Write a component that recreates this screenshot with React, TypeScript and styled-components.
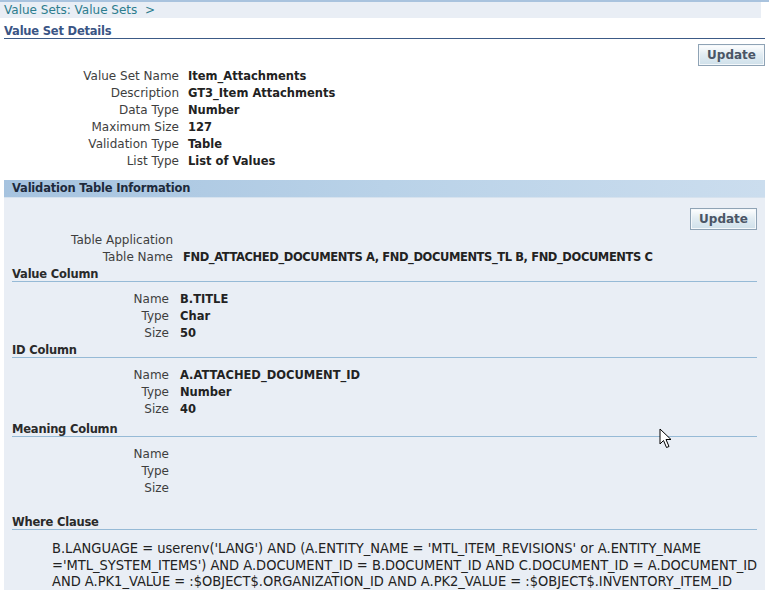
import React from 'react';
import styled, { createGlobalStyle } from 'styled-components';

const GlobalStyle = createGlobalStyle`
  html, body {
    margin: 0;
    padding: 0;
    background: #ffffff;
    font-family: "DejaVu Sans", Verdana, sans-serif;
    font-size: 12px;
    color: #333333;
  }
`;

const Page = styled.div`
  position: relative;
  width: 769px;
  height: 590px;
  overflow: hidden;
  border-top: 2px solid #a9c3de;
  box-sizing: border-box;
`;

const Breadcrumb = styled.div`
  height: 16px;
  line-height: 16px;
  background: #e9eef5;
  padding-left: 4px;
  font-size: 12px;
  color: #2d7d8e;
  margin-right: 8px;
`;

const Body = styled.div`
  padding: 0 4px;
`;

const PageTitle = styled.h1`
  margin: 7px 0 0;
  font-size: 11.5px;
  letter-spacing: -0.2px;
  font-weight: bold;
  color: #3a5585;
  line-height: 13px;
  padding-bottom: 0;
  border-bottom: 1px solid #3c5a86;
`;

const ButtonRow = styled.div<{ $top: number }>`
  display: flex;
  justify-content: flex-end;
  padding-top: ${({ $top }) => `${$top}px`};
`;

const Button = styled.button`
  font-family: "DejaVu Sans", Verdana, sans-serif;
  font-size: 12px;
  font-weight: bold;
  color: #4a5565;
  height: 22px;
  width: 67px;
  padding: 0;
  border: 1px solid #8fa3b5;
  background: linear-gradient(#ffffff, #e3edf3 45%, #cfe0ea);
  box-shadow: inset 0 0 0 1px #f4f8fb;
  cursor: pointer;
`;

const Fields = styled.div<{ $labelWidth: number; $gap: number; $top?: number }>`
  display: grid;
  grid-template-columns: ${({ $labelWidth }) => `${$labelWidth}px auto`};
  column-gap: ${({ $gap }) => `${$gap}px`};
  margin-top: ${({ $top }) => `${$top ?? 0}px`};
  line-height: 17px;
`;

const Label = styled.div`
  text-align: right;
  color: #3e3e3e;
  white-space: nowrap;
`;

const Value = styled.div<{ $tight?: boolean }>`
  font-weight: bold;
  font-size: 11.5px;
  letter-spacing: ${({ $tight }) => ($tight ? '-0.4px' : '0')};
  color: #222222;
  white-space: nowrap;
`;

const Section = styled.section`
  margin-top: 10px;
  background: #e9eef5;
  min-height: 420px;
`;

const SectionHeader = styled.h2`
  margin: 0;
  height: 17px;
  line-height: 17px;
  padding-left: 8px;
  font-size: 11.5px;
  letter-spacing: -0.2px;
  font-weight: bold;
  color: #1e2a3c;
  background: linear-gradient(90deg, #a6c3df, #b9d2e8 50%, #cbddee);
  border-bottom: 1px solid #d6e2ee;
`;

const SectionBody = styled.div`
  padding: 0 8px;
`;

const SubHeader = styled.h3`
  margin: 1px 0 0;
  font-size: 11.5px;
  letter-spacing: -0.2px;
  font-weight: bold;
  color: #2a2a2a;
  line-height: 13px;
  border-bottom: 1px solid #96bad6;
`;

const Group = styled.div<{ $top?: number }>`
  margin-top: ${({ $top }) => `${$top ?? 0}px`};
`;

const WhereText = styled.div`
  margin-top: 10px;
  padding-left: 40px;
  font-family: "DejaVu Sans Condensed", "DejaVu Sans", sans-serif;
  font-stretch: condensed;
  font-size: 14.5px;
  line-height: 16.5px;
  color: #222222;
  white-space: nowrap;
`;

const Cursor = styled.svg`
  position: absolute;
  left: 659px;
  top: 426px;
  width: 14px;
  height: 22px;
`;

const details: [string, string][] = [
  ['Value Set Name', 'Item_Attachments'],
  ['Description', 'GT3_Item Attachments'],
  ['Data Type', 'Number'],
  ['Maximum Size', '127'],
  ['Validation Type', 'Table'],
  ['List Type', 'List of Values'],
];

type Column = { title: string; name: string; type: string; size: string; gap: number };

const columns: Column[] = [
  { title: 'Value Column', name: 'B.TITLE', type: 'Char', size: '50', gap: 2 },
  { title: 'ID Column', name: 'A.ATTACHED_DOCUMENT_ID', type: 'Number', size: '40', gap: 2 },
  { title: 'Meaning Column', name: '', type: '', size: '', gap: 5 },
];

const ColumnBlock: React.FC<{ col: Column }> = ({ col }) => (
  <Group $top={col.gap}>
    <SubHeader>{col.title}</SubHeader>
    <Fields $labelWidth={157} $gap={11} $top={9}>
      <Label>Name</Label>
      <Value>{col.name}</Value>
      <Label>Type</Label>
      <Value>{col.type}</Value>
      <Label>Size</Label>
      <Value>{col.size}</Value>
    </Fields>
  </Group>
);

const App: React.FC = () => (
  <>
    <GlobalStyle />
    <Page>
      <Breadcrumb>Value Sets: Value Sets&nbsp;&nbsp;&gt;</Breadcrumb>
      <Body>
        <PageTitle>Value Set Details</PageTitle>
        <ButtonRow $top={5}>
          <Button>Update</Button>
        </ButtonRow>
        <Fields $labelWidth={175} $gap={9} $top={2}>
          {details.map(([label, value]) => (
            <React.Fragment key={label}>
              <Label>{label}</Label>
              <Value>{value}</Value>
            </React.Fragment>
          ))}
        </Fields>

        <Section>
          <SectionHeader>Validation Table Information</SectionHeader>
          <SectionBody>
            <ButtonRow $top={10}>
              <Button>Update</Button>
            </ButtonRow>
            <Fields $labelWidth={161} $gap={10} $top={2}>
              <Label>Table Application</Label>
              <Value></Value>
              <Label>Table Name</Label>
              <Value $tight>FND_ATTACHED_DOCUMENTS A, FND_DOCUMENTS_TL B, FND_DOCUMENTS C</Value>
            </Fields>
            {columns.map((c) => (
              <ColumnBlock key={c.title} col={c} />
            ))}
            <Group $top={19}>
              <SubHeader>Where Clause</SubHeader>
              <WhereText>
                B.LANGUAGE = userenv('LANG') AND (A.ENTITY_NAME = 'MTL_ITEM_REVISIONS' or A.ENTITY_NAME
                <br />
                ='MTL_SYSTEM_ITEMS') AND A.DOCUMENT_ID = B.DOCUMENT_ID AND C.DOCUMENT_ID = A.DOCUMENT_ID
                <br />
                AND A.PK1_VALUE = :$OBJECT$.ORGANIZATION_ID AND A.PK2_VALUE = :$OBJECT$.INVENTORY_ITEM_ID
              </WhereText>
            </Group>
          </SectionBody>
        </Section>
      </Body>
      <Cursor viewBox="0 0 14 22">
        <path d="M1 1 L1 16 L4.5 12.5 L7.5 19.5 L10 18.5 L7 11.5 L12 11.5 Z" fill="#ffffff" stroke="#000000" strokeWidth="1" />
      </Cursor>
    </Page>
  </>
);

export default App;
